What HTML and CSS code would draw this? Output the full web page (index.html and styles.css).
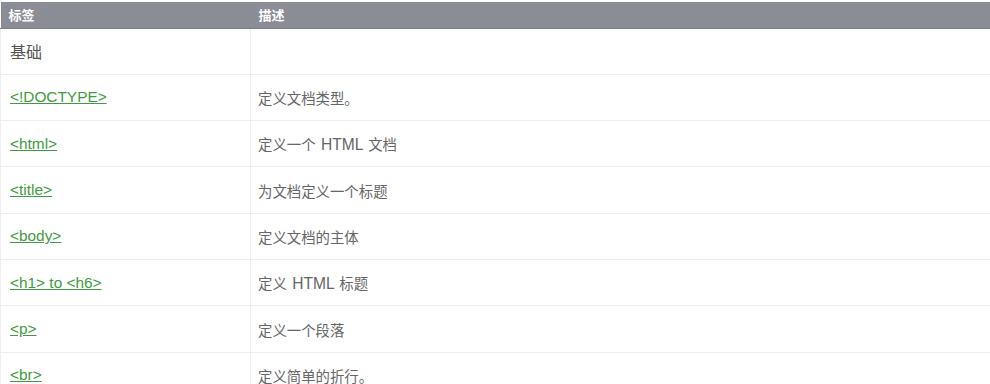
FILE: index.html
```html
<!DOCTYPE html>
<html lang="zh">
<head>
<meta charset="utf-8">
<link rel="stylesheet" href="styles.css">
</head>
<body>
<table class="ref">
  <thead>
    <tr><th class="c1">标签</th><th>描述</th></tr>
  </thead>
  <tbody>
    <tr><td class="c1 group">基础</td><td></td></tr>
    <tr><td class="c1"><a href="#">&lt;!DOCTYPE&gt;</a></td><td>定义文档类型。</td></tr>
    <tr><td class="c1"><a href="#">&lt;html&gt;</a></td><td>定义一个<span class="latin"> HTML </span>文档</td></tr>
    <tr><td class="c1"><a href="#">&lt;title&gt;</a></td><td>为文档定义一个标题</td></tr>
    <tr><td class="c1"><a href="#">&lt;body&gt;</a></td><td>定义文档的主体</td></tr>
    <tr><td class="c1"><a href="#">&lt;h1&gt; to &lt;h6&gt;</a></td><td>定义<span class="latin"> HTML </span>标题</td></tr>
    <tr><td class="c1"><a href="#">&lt;p&gt;</a></td><td>定义一个段落</td></tr>
    <tr><td class="c1"><a href="#">&lt;br&gt;</a></td><td>定义简单的折行。</td></tr>
  </tbody>
</table>
</body>
</html>
```
FILE: styles.css
```css
html, body {
  margin: 0;
  padding: 0;
  background: #fff;
}
body {
  padding-top: 2px;
  font-family: "Liberation Sans", "Noto Sans CJK SC", sans-serif;
}
.ref {
  width: 992px;
  border-collapse: collapse;
  table-layout: fixed;
}
.ref th {
  background: #8b8d95;
  color: #fff;
  font-size: 13px;
  font-weight: bold;
  text-align: left;
  height: 26px;
  padding: 0 0 0 8px;
  border-bottom: 1px solid #7d7f86;
  box-sizing: border-box;
}
.ref .c1 {
  width: 250px;
}
.ref td {
  height: 46.34px;
  padding: 0 0 0 7px;
  font-size: 14.4px;
  color: #666;
  border: 1px solid #eee;
  border-top: 1px solid #ebebeb;
  box-sizing: border-box;
  vertical-align: middle;
}
.ref td.c1 {
  padding-left: 9px;
  border-left: 1px solid #eee;
}
.ref td.group {
  font-size: 16px;
  color: #555;
}
.ref .latin {
  font-size: 15.6px;
  word-spacing: 1px;
}
.ref a {
  font-size: 15.4px;
  color: #3f9b3f;
  text-decoration: underline;
}
```
